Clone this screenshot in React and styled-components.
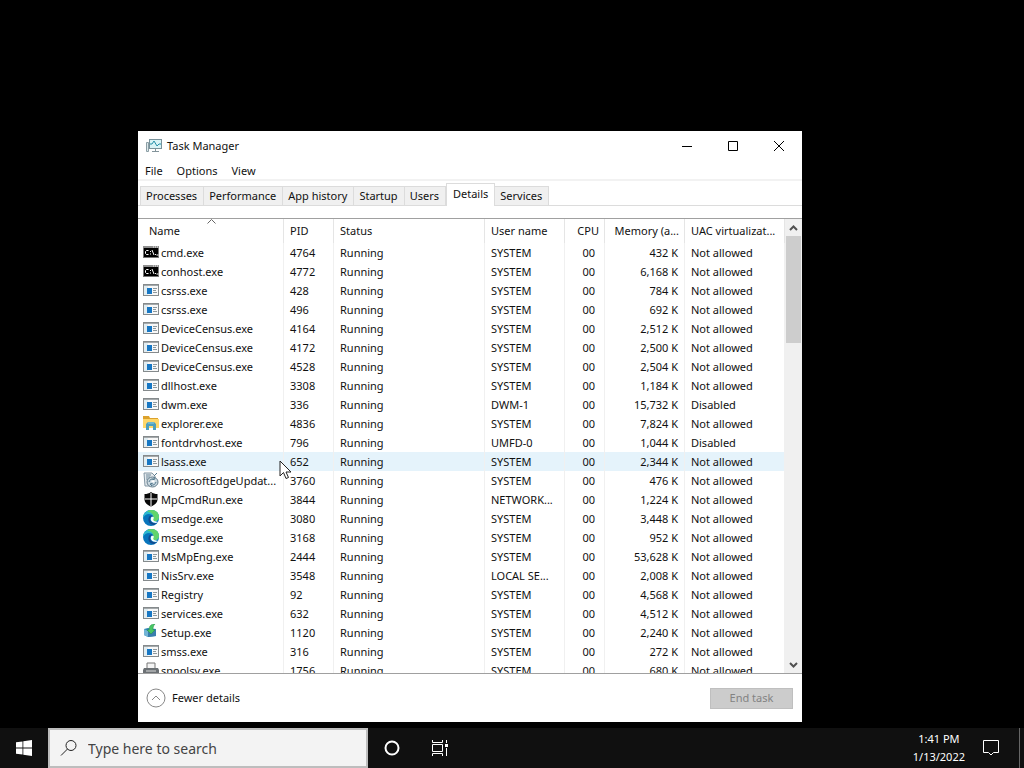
import React, { useState } from "react";
import styled, { createGlobalStyle } from "styled-components";

const tabs = ["Processes", "Performance", "App history", "Startup", "Users", "Details", "Services"];

const processes = [
  ["cmd.exe", "4764", "SYSTEM", "432 K", "Not allowed", "console"],
  ["conhost.exe", "4772", "SYSTEM", "6,168 K", "Not allowed", "console"],
  ["csrss.exe", "428", "SYSTEM", "784 K", "Not allowed"],
  ["csrss.exe", "496", "SYSTEM", "692 K", "Not allowed"],
  ["DeviceCensus.exe", "4164", "SYSTEM", "2,512 K", "Not allowed"],
  ["DeviceCensus.exe", "4172", "SYSTEM", "2,500 K", "Not allowed"],
  ["DeviceCensus.exe", "4528", "SYSTEM", "2,504 K", "Not allowed"],
  ["dllhost.exe", "3308", "SYSTEM", "1,184 K", "Not allowed"],
  ["dwm.exe", "336", "DWM-1", "15,732 K", "Disabled"],
  ["explorer.exe", "4836", "SYSTEM", "7,824 K", "Not allowed", "folder"],
  ["fontdrvhost.exe", "796", "UMFD-0", "1,044 K", "Disabled"],
  ["lsass.exe", "652", "SYSTEM", "2,344 K", "Not allowed"],
  ["MicrosoftEdgeUpdat...", "3760", "SYSTEM", "476 K", "Not allowed", "update"],
  ["MpCmdRun.exe", "3844", "NETWORK...", "1,224 K", "Not allowed", "shield"],
  ["msedge.exe", "3080", "SYSTEM", "3,448 K", "Not allowed", "edge"],
  ["msedge.exe", "3168", "SYSTEM", "952 K", "Not allowed", "edge"],
  ["MsMpEng.exe", "2444", "SYSTEM", "53,628 K", "Not allowed"],
  ["NisSrv.exe", "3548", "LOCAL SE...", "2,008 K", "Not allowed"],
  ["Registry", "92", "SYSTEM", "4,568 K", "Not allowed"],
  ["services.exe", "632", "SYSTEM", "4,512 K", "Not allowed"],
  ["Setup.exe", "1120", "SYSTEM", "2,240 K", "Not allowed", "setup"],
  ["smss.exe", "316", "SYSTEM", "272 K", "Not allowed"],
  ["spoolsv.exe", "1756", "SYSTEM", "680 K", "Not allowed", "printer"],
];

const drawings = {
  app: (
    <>
      <rect x="0.5" y="2.5" width="15" height="11" fill="#f8f8f8" stroke="#858a8c" />
      <path d="M1 3.500h14" stroke="#a4a9ab" />
      <rect x="1" y="4" width="4" height="9" fill="#e1edf2" />
      <rect x="4" y="6" width="5" height="6" fill="#1777c4" />
      <path d="M10 6.5h4M10 8.5h3M10 10.5h4" stroke="#8d989d" />
    </>
  ),
  console: (
    <>
      <rect x="0.5" y="2.5" width="15" height="11" fill="#000" stroke="#777" />
      <path d="M0 3h16" stroke="#8f8f8f" strokeWidth="2" />
      <path d="M10 3h1M12 3h1M14 3h1" stroke="#eee" />
      <path
        d="M5.500 6.500h-2l-1 1v2l1 1h2M7.500 7v1M7.500 9.500v1M9 6l2 5M12 10.500h1M13.500 11h2"
        fill="none"
        stroke="#fff"
      />
    </>
  ),
  folder: (
    <>
      <path d="M0 1h6l1 2h8v10H0z" fill="#dca22d" />
      <path d="M0 4h16v9H0z" fill="#ffd76a" />
      <path d="M3 15V9l2-2h6l2 2v6h-3v-4H6v4z" fill="#4e9fbe" />
      <path d="M5 8h6" stroke="#90d0df" />
    </>
  ),
  update: (
    <>
      <path d="M1 1h8l3 3v10H2z" fill="#e3e9ed" stroke="#8296a3" />
      <path d="M3 3h5M3 5h4M3 7h2" stroke="#6b8799" />
      <ellipse cx="9.5" cy="10" rx="5.5" ry="5" fill="#cbd9e1" stroke="#667e8d" />
      <path d="M6 10a4 4 0 0 1 5-3M13 10a4 4 0 0 1-5 3M11 5l1 2-3 1M9 14l-2-2 3-1M11 4l3-3" fill="none" stroke="#54798e" />
      <path d="M8 9l2-1 2 1-2 2z" fill="#fff" />
    </>
  ),
  shield: (
    <>
      <path d="M8 1c2 1.5 4 2 6.500 2v5c0 4-3 6-6.500 7.500C4.500 14 1.500 12 1.500 8V3C4 3 6 2.500 8 1z" fill="#080808" />
      <path d="M8 2v13M2 8h12" stroke="#fff" />
    </>
  ),
  edge: (
    <>
      <circle cx="8" cy="8" r="8" fill="#0875bc" />
      <path d="M0 8C0 3 4 0 8 0c5 0 8 3 8 7 0 3-2 5-5 4-2 0-2-1-1-2 2-2-1-5-4-5-3 0-5 2-6 4z" fill="#2cb8cf" />
      <path d="M9 0c4 0 7 3 7 7 0 3-3 5-6 4-1-1-1-1 0-2 1-3 0-6-4-7l-2-.5A8 8 0 0 1 9 0z" fill="#62d46c" />
      <path d="M6 7c-2 4 1 8 5 8l3-2c-4 1-7-1-7-4 0-2 2-3 3-2 0-2-3-2-4 0z" fill="#114b91" />
      <path d="M8 8c0-1 2-2 3 0-1 1-1 2 0 3l4 1-2 1c-4 0-6-3-5-5z" fill="#f8ffff" />
    </>
  ),
  setup: (
    <>
      <path d="M1 5l4-1 8 1v7l-8 1-4-2z" fill="#3185b5" />
      <path d="M1 5l4 2v6l-4-2z" fill="#72b4d5" />
      <path d="M5 7l8-2v7l-8 1z" fill="#397eae" />
      <path d="M12 0C8 0 6 2 6 6H4l4 4 4-4h-2c0-2 0-4 2-6z" fill="#48c764" stroke="#248c4b" strokeWidth=".5" />
    </>
  ),
  printer: (
    <>
      <path d="M4 1h8v6H4z" fill="#f4f4f4" stroke="#777" />
      <path d="M1 6h14l1 2v5H0V8z" fill="#6b7074" />
      <path d="M3 9h10M4 12h8" stroke="#dadada" />
    </>
  ),
};

function ProcessIcon({ kind = "app" }) {
  return (
    <svg width="16" height="16" viewBox="0 0 16 16" aria-hidden="true">
      {drawings[kind]}
    </svg>
  );
}

export default function App() {
  const [activeTab, setActiveTab] = useState("Details");

  return (
    <Desktop>
      <GlobalStyle />
      <Workspace>
        <TaskManager>
          <TitleBar>
            <AppMark />
            <h1>Task Manager</h1>
            <WindowButton aria-label="Minimize">
              <svg width="12" height="12"><path d="M1 6.5h10" /></svg>
            </WindowButton>
            <WindowButton aria-label="Maximize">
              <svg width="12" height="12"><path d="M1.500 1.500h9v9h-9z" /></svg>
            </WindowButton>
            <WindowButton aria-label="Close">
              <svg width="12" height="12"><path d="M1 1l10 10M11 1L1 11" /></svg>
            </WindowButton>
          </TitleBar>
          <MenuBar>
            <button>File</button>
            <button>Options</button>
            <button>View</button>
          </MenuBar>
          <TabBar role="tablist">
            {tabs.map((tab) => (
              <Tab
                key={tab}
                role="tab"
                aria-selected={tab === activeTab}
                $active={tab === activeTab}
                onClick={() => setActiveTab(tab)}
              >
                {tab}
              </Tab>
            ))}
          </TabBar>
          <Details>
            <TableArea>
              <ProcessTable>
                <colgroup>
                  <col width="146" />
                  <col width="50" />
                  <col width="151" />
                  <col width="80" />
                  <col width="40" />
                  <col width="80" />
                  <col />
                </colgroup>
                <thead>
                  <tr>
                    <NameHeader aria-sort="ascending">
                      Name
                      <SortArrow width="9" height="5"><path d="M.5 4.500l4-4 4 4" /></SortArrow>
                    </NameHeader>
                    <HeaderCell>PID</HeaderCell>
                    <HeaderCell>Status</HeaderCell>
                    <HeaderCell>User name</HeaderCell>
                    <HeaderCell $right>CPU</HeaderCell>
                    <HeaderCell $right>Memory (a...</HeaderCell>
                    <HeaderCell>UAC virtualizat...</HeaderCell>
                  </tr>
                </thead>
                <tbody>
                  {processes.map(([name, pid, user, memory, uac, icon]) => (
                    <Row key={pid} $hovered={name === "lsass.exe"}>
                      <Cell>
                        <ProcessName>
                          <ProcessIcon kind={icon} />
                          <span>{name}</span>
                        </ProcessName>
                      </Cell>
                      <Cell>{pid}</Cell>
                      <Cell>Running</Cell>
                      <Cell>{user}</Cell>
                      <Cell $right $wide>00</Cell>
                      <Cell $right>{memory}</Cell>
                      <Cell>{uac}</Cell>
                    </Row>
                  ))}
                </tbody>
              </ProcessTable>
            </TableArea>
            <ScrollBar>
              <button aria-label="Scroll up">
                <svg width="9" height="6"><path d="M1 5l3.500-3.500L8 5" /></svg>
              </button>
              <ScrollTrack>
                <ScrollThumb />
              </ScrollTrack>
              <button aria-label="Scroll down">
                <svg width="9" height="6"><path d="M1 1l3.500 3.500L8 1" /></svg>
              </button>
            </ScrollBar>
          </Details>
          <Footer>
            <FewerDetails>
              <svg width="20" height="20" aria-hidden="true">
                <circle cx="10" cy="10" r="9" />
                <path d="M6 12l4-4 4 4" />
              </svg>
              Fewer details
            </FewerDetails>
            <EndTask disabled>End task</EndTask>
          </Footer>
        </TaskManager>
        <Pointer width="13" height="20" viewBox="0 0 13 20" aria-hidden="true">
          <path d="M1 1v15l3.500-3.500 2.500 6 2.500-1-2.500-5.500H12z" />
        </Pointer>
      </Workspace>
      <TaskBar>
        <TaskButton aria-label="Start">
          <svg width="16" height="16" fill="#fff">
            <path d="M0 2.300L6.500 1.400v6.200H0zM7.300 1.300L16 0v7.600H7.300zM0 8.400h6.500v6.200L0 13.700zM7.300 8.400H16V16l-8.700-1.300z" />
          </svg>
        </TaskButton>
        <Search>
          <svg width="18" height="18" aria-hidden="true">
            <circle cx="11" cy="6.500" r="5" />
            <path d="M7.500 10L1 16.500" />
          </svg>
          <input aria-label="Search" placeholder="Type here to search" />
        </Search>
        <TaskButton aria-label="Cortana">
          <svg width="16" height="16" fill="none" stroke="#fff" strokeWidth="2">
            <circle cx="8" cy="8" r="6.500" />
          </svg>
        </TaskButton>
        <TaskButton aria-label="Task view">
          <svg width="16" height="16" fill="none" stroke="#fff">
            <path d="M.5 0v2.500h10V0M.5 16v-2.500h10V16M.5 4.500h10v7H.5zM14.500 0v3M14.500 8v8" />
            <path d="M13 4h3v3h-3z" fill="#fff" stroke="none" />
          </svg>
        </TaskButton>
        <Clock>
          <span>1:41 PM</span>
          <span>1/13/2022</span>
        </Clock>
        <TaskButton aria-label="Notifications">
          <svg width="18" height="18" fill="none" stroke="#fff">
            <path d="M1.500 1.500h15v12h-5L9 16l-2.500-2.500h-5z" />
          </svg>
        </TaskButton>
        <ShowDesktop aria-label="Show desktop" />
      </TaskBar>
    </Desktop>
  );
}

function AppMark() {
  return (
    <svg width="16" height="16" viewBox="0 0 16 16" aria-hidden="true">
      <rect x="3.500" y="1.500" width="12" height="9" fill="#d9f3f6" stroke="#78929b" />
      <path d="M4 6h2l2-3 3 5 2-2h2" fill="none" stroke="#2590a9" />
      <path d="M9.500 11v2M6 13.500h7" stroke="#83949b" />
      <path d="M.5 4.500h2v9h-2z" fill="#dce8eb" stroke="#8b9ea5" />
    </svg>
  );
}

const GlobalStyle = createGlobalStyle`
  * {
    box-sizing: border-box;
  }
  body {
    margin: 0;
    background: #000;
    color: #111;
    font-family: "Noto Sans", "Open Sans", sans-serif;
    font-size: 11px;
    line-height: 16px;
  }
  button, input {
    margin: 0;
    padding: 0;
    border: 0;
    background: transparent;
    color: inherit;
    font: inherit;
  }
  svg {
    display: block;
    flex: none;
  }
`;
const Desktop = styled.div`
  display: flex;
  flex-direction: column;
  height: 100vh;
  overflow: hidden;
`;
const Workspace = styled.main`
  position: relative;
  flex: 1;
  min-height: 0;
`;
const TaskManager = styled.section`
  position: absolute;
  inset: 131px 222px 6px 138px;
  display: flex;
  flex-direction: column;
  background: #fff;
`;
const TitleBar = styled.header`
  display: flex;
  align-items: center;
  height: 30px;
  padding-left: 8px;
  h1 {
    flex: 1;
    margin: 0 0 0 5px;
    font-size: 11px;
    font-weight: 400;
  }
`;
const WindowButton = styled.button`
  display: grid;
  place-items: center;
  width: 46px;
  height: 28px;
  svg {
    fill: none;
    stroke: #000;
  }
`;
const MenuBar = styled.nav`
  display: flex;
  gap: 14px;
  height: 20px;
  padding: 2px 7px 0;
  border-bottom: 2px solid #f2f2f2;
`;
const TabBar = styled.div`
  display: flex;
  align-items: flex-end;
  height: 25px;
  padding-left: 2px;
  border-bottom: 1px solid #dcdcdc;
`;
const Tab = styled.button`
  height: ${({ $active }) => ($active ? "23px" : "19px")};
  margin-bottom: ${({ $active }) => ($active ? "-1px" : "0")};
  padding: ${({ $active }) => ($active ? "0 6px 2px" : "0 6px 0 5px")};
  border: 1px solid #dcdcdc;
  border-bottom: 0;
  border-left-width: ${({ $active }) => ($active ? "1px" : "0")};
  background: ${({ $active }) => ($active ? "#fff" : "#f0f0f0")};
  white-space: nowrap;
  &:first-child {
    border-left-width: 1px;
  }
`;
const Details = styled.div`
  display: flex;
  flex: 1;
  min-height: 0;
  margin-top: 12px;
  border-top: 1px solid #a0a0a0;
  border-bottom: 1px solid #a0a0a0;
`;
const TableArea = styled.div`
  flex: 1;
  min-width: 0;
  overflow: hidden;
`;
const ProcessTable = styled.table`
  width: 100%;
  table-layout: fixed;
  border-collapse: separate;
  border-spacing: 0;
`;
const HeaderCell = styled.th`
  height: 24px;
  padding: ${({ $right }) => ($right ? "0 5px 0 0" : "0 0 0 6px")};
  border-right: 1px solid #e5e5e5;
  font-weight: 400;
  text-align: ${({ $right }) => ($right ? "right" : "left")};
  white-space: nowrap;
`;
const NameHeader = styled(HeaderCell)`
  position: relative;
  padding-left: 11px;
`;
const SortArrow = styled.svg`
  position: absolute;
  top: 0;
  left: calc(50% - 4px);
  fill: none;
  stroke: #666;
`;
const Row = styled.tr`
  background: ${({ $hovered }) => ($hovered ? "#e5f3fb" : "#fff")};
`;
const Cell = styled.td`
  height: 19px;
  padding: ${({ $right, $wide }) => ($right ? `0 ${$wide ? 9 : 6}px 0 0` : "0 0 0 6px")};
  border-right: 1px solid #f0f0f0;
  line-height: 19px;
  text-align: ${({ $right }) => ($right ? "right" : "left")};
  white-space: nowrap;
  &:first-child {
    padding-left: 5px;
  }
`;
const ProcessName = styled.div`
  display: flex;
  gap: 2px;
  svg {
    margin-top: 1px;
  }
`;
const ScrollBar = styled.div`
  display: flex;
  flex-direction: column;
  width: 17px;
  background: #f0f0f0;
  button {
    display: grid;
    place-items: center;
    height: 17px;
  }
  svg {
    fill: none;
    stroke: #505050;
    stroke-width: 2;
  }
`;
const ScrollTrack = styled.div`
  flex: 1;
  padding: 0 1px;
`;
const ScrollThumb = styled.div`
  height: 107px;
  background: #cdcdcd;
`;
const Footer = styled.footer`
  display: flex;
  align-items: center;
  justify-content: space-between;
  height: 48px;
  padding: 0 9px 0 8px;
`;
const FewerDetails = styled.button`
  display: flex;
  align-items: center;
  gap: 6px;
  svg {
    fill: none;
    stroke: #888;
  }
`;
const EndTask = styled.button`
  width: 83px;
  height: 21px;
  border: 1px solid #bfbfbf;
  background: #ccc;
  color: #838383;
`;
const Pointer = styled.svg`
  position: absolute;
  top: 460px;
  left: 279px;
  fill: #fff;
  stroke: #222;
`;
const TaskBar = styled.footer`
  display: flex;
  align-items: center;
  height: 40px;
  background: #101010;
  color: #fff;
`;
const TaskButton = styled.button`
  display: grid;
  place-items: center;
  width: 48px;
  height: 40px;
`;
const Search = styled.label`
  display: flex;
  align-items: center;
  gap: 10px;
  width: 320px;
  height: 40px;
  padding: 0 10px;
  border: 2px solid #bdbdbd;
  background: #f3f3f3;
  svg {
    fill: none;
    stroke: #222;
  }
  input {
    flex: 1;
    min-width: 0;
    height: 24px;
    outline: 0;
    color: #333;
    font-size: 14px;
  }
  input::placeholder {
    color: #444;
    opacity: 1;
  }
`;
const Clock = styled.div`
  display: flex;
  flex-direction: column;
  align-items: center;
  gap: 2px;
  margin-left: auto;
  padding-right: 2px;
`;
const ShowDesktop = styled.button`
  width: 5px;
  height: 40px;
  margin-left: 4px;
  border-left: 1px solid #666;
`;
